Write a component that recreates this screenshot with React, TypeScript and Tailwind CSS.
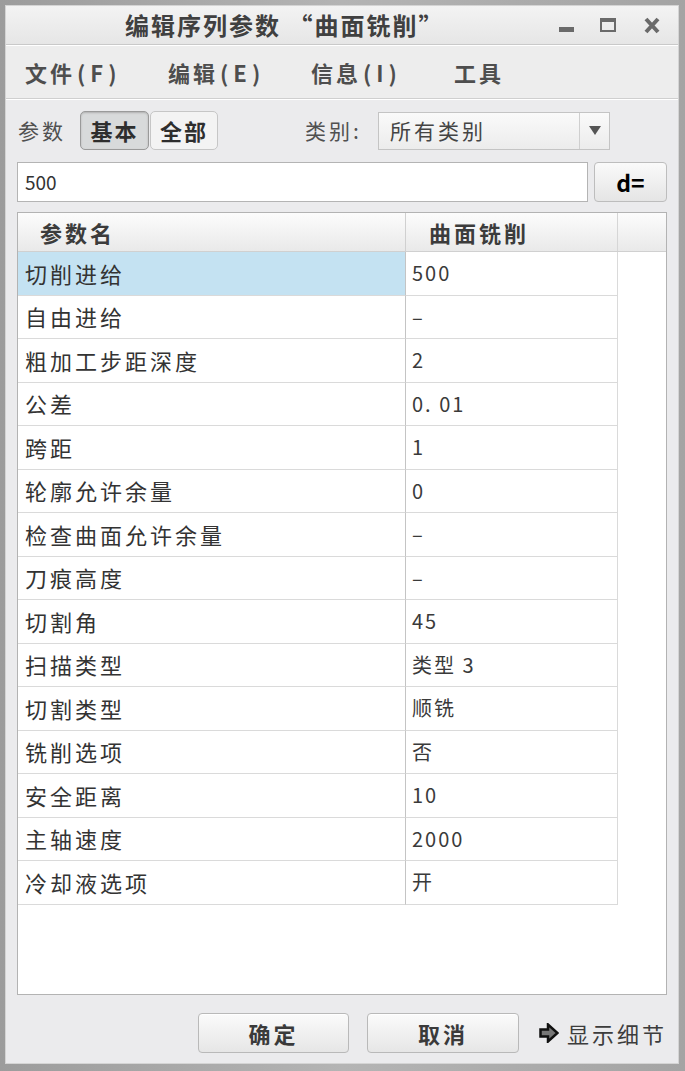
import React from "react";

const FONT = { fontFamily: '"Noto Sans CJK SC", "Noto Sans", sans-serif' };

const rows: [string, string][] = [
  ["切削进给", "500"],
  ["自由进给", "–"],
  ["粗加工步距深度", "2"],
  ["公差", "0. 01"],
  ["跨距", "1"],
  ["轮廓允许余量", "0"],
  ["检查曲面允许余量", "–"],
  ["刀痕高度", "–"],
  ["切割角", "45"],
  ["扫描类型", "类型 3"],
  ["切割类型", "顺铣"],
  ["铣削选项", "否"],
  ["安全距离", "10"],
  ["主轴速度", "2000"],
  ["冷却液选项", "开"],
];

function WindowControls() {
  return (
    <div className="flex items-center gap-[22px] pr-[18px]">
      <div className="w-[15px] h-[5px] bg-[#6a6a6a] mt-[8px]" />
      <div className="w-[16px] h-[14px] border-2 border-t-[4px] border-[#6a6a6a] ml-[4px]" />
      <svg width="16" height="17" viewBox="0 0 16 17" className="ml-[6px]">
        <path d="M2 2 L14 15 M14 2 L2 15" stroke="#6a6a6a" strokeWidth="4" />
      </svg>
    </div>
  );
}

function MenuItem({ label, key2 }: { label: string; key2?: string }) {
  return (
    <div className="w-[143px] text-[22px] tracking-[3px] font-semibold text-[#4e4e4e] whitespace-nowrap">
      {label}
      {key2 && <span className="tracking-[5px] ml-[2px]">({key2})</span>}
    </div>
  );
}

function FooterButton({ label }: { label: string }) {
  return (
    <button className="w-[152px] h-[40px] rounded-[4px] border border-[#b9b9b9] bg-gradient-to-b from-[#fbfbfb] to-[#e6e6e6] text-[22px] font-bold tracking-[3px] text-[#3a3a3a] shadow-[inset_0_1px_0_#ffffff]">
      {label}
    </button>
  );
}

function Row({ name, value, selected }: { name: string; value: string; selected?: boolean }) {
  return (
    <div className="flex h-[43.5px]">
      <div
        className={`w-[388px] border-b border-r border-b-[#dadada] border-r-[#c4c4c4] flex items-center pl-[7px] text-[22px] tracking-[3px] text-[#333] ${
          selected ? "bg-[#c4e2f2]" : "bg-white"
        }`}
      >
        {name}
      </div>
      <div className="w-[212px] border-b border-r border-[#dadada] flex items-center pl-[6px] text-[20px] tracking-[2px] text-[#3a3a3a]">
        {value}
      </div>
    </div>
  );
}

export default function App() {
  return (
    <div className="w-[685px] h-[1071px] bg-gradient-to-r from-[#9c9c9c] via-[#b4b4b4] to-[#a4a4a4] pt-[5px] pl-[5px] pr-[6px] pb-[7px]" style={FONT}>
      <div className="h-full flex flex-col bg-[#ebebed] border border-[#d4d4d4]">
        {/* title bar */}
        <div className="h-[39px] flex items-center justify-between bg-gradient-to-b from-[#f3f3f3] to-[#e6e6e6] border-b border-[#c9c9c9]">
          <div className="pl-[119px] text-[24px] font-bold tracking-[2px] text-[#404040] leading-none">
            编辑序列参数 “曲面铣削”
          </div>
          <WindowControls />
        </div>

        {/* menu bar */}
        <div className="h-[54px] flex items-center pl-[19px] bg-[#ededed] border-t border-white border-b border-b-[#cfcfcf]">
          <MenuItem label="文件" key2="F" />
          <MenuItem label="编辑" key2="E" />
          <MenuItem label="信息" key2="I" />
          <MenuItem label="工具" />
        </div>

        <div className="flex-1 flex flex-col px-[11px] pt-[11px] border-t border-white">
          {/* toolbar */}
          <div className="flex items-center h-[39px]">
            <span className="text-[21px] tracking-[3px] text-[#505050] w-[62px] ml-[1px]">参数</span>
            <button className="w-[69px] h-[39px] rounded-[5px] border border-[#9a9a9a] bg-[#d8dadb] text-[22px] font-bold tracking-[2px] text-[#2e2e2e] shadow-[inset_0_1px_2px_#b0b0b0]">
              基本
            </button>
            <button className="w-[68px] h-[39px] ml-[1px] rounded-[5px] border border-[#c6c6c6] bg-[#f3f3f3] text-[22px] font-bold tracking-[2px] text-[#2e2e2e]">
              全部
            </button>
            <span className="ml-[87px] w-[73px] text-[21px] tracking-[3px] text-[#505050]">类别:</span>
            <div className="w-[232px] h-[38px] flex border border-[#c4c4c4] bg-gradient-to-b from-[#fafafa] to-[#ececec]">
              <div className="flex-1 flex items-center pl-[11px] text-[21px] tracking-[3px] text-[#444]">所有类别</div>
              <div className="w-[30px] border-l border-[#cfcfcf] flex items-center justify-center">
                <svg width="12" height="9" viewBox="0 0 12 9">
                  <path d="M0 0 H12 L6 9 Z" fill="#555" />
                </svg>
              </div>
            </div>
          </div>

          {/* input row */}
          <div className="flex mt-[12px] h-[40px]">
            <div className="w-[571px] h-[40px] border border-[#b4b4b4] bg-white flex items-center pl-[7px] text-[19px] text-[#333]">
              500
            </div>
            <button className="ml-[6px] w-[73px] h-[40px] rounded-[4px] border border-[#bdbdbd] bg-gradient-to-b from-[#fafafa] to-[#e5e5e5] text-[23px] font-bold text-black">
              d=
            </button>
          </div>

          {/* table */}
          <div className="mt-[10px] h-[783px] border border-[#b3b3b3] bg-white flex flex-col">
            <div className="flex h-[39px] bg-gradient-to-b from-[#fcfcfc] to-[#e9e9e9] border-b border-[#d0d0d0]">
              <div className="w-[388px] border-r border-[#d0d0d0] flex items-center pl-[22px] text-[22px] font-bold tracking-[3px] text-[#3c3c3c]">
                参数名
              </div>
              <div className="w-[212px] border-r border-[#d6d6d6] flex items-center pl-[23px] text-[22px] font-bold tracking-[3px] text-[#3c3c3c]">
                曲面铣削
              </div>
              <div className="flex-1" />
            </div>
            {rows.map(([n, v], i) => (
              <Row key={n} name={n} value={v} selected={i === 0} />
            ))}
          </div>

          {/* footer */}
          <div className="flex items-center mt-[18px] h-[40px] pl-[181px]">
            <FooterButton label="确定" />
            <div className="ml-[18px]">
              <FooterButton label="取消" />
            </div>
            <div className="ml-[20px] flex items-center gap-[8px]">
              <svg width="20" height="20" viewBox="0 0 20 20">
                <path d="M1.5 6.5 H9 V1.5 L18.5 10 L9 18.5 V13.5 H1.5 Z" fill="#777" stroke="#111" strokeWidth="2.5" strokeLinejoin="miter" />
              </svg>
              <span className="text-[22px] tracking-[3px] text-[#3c3c3c] whitespace-nowrap">显示细节</span>
            </div>
          </div>
        </div>
      </div>
    </div>
  );
}
